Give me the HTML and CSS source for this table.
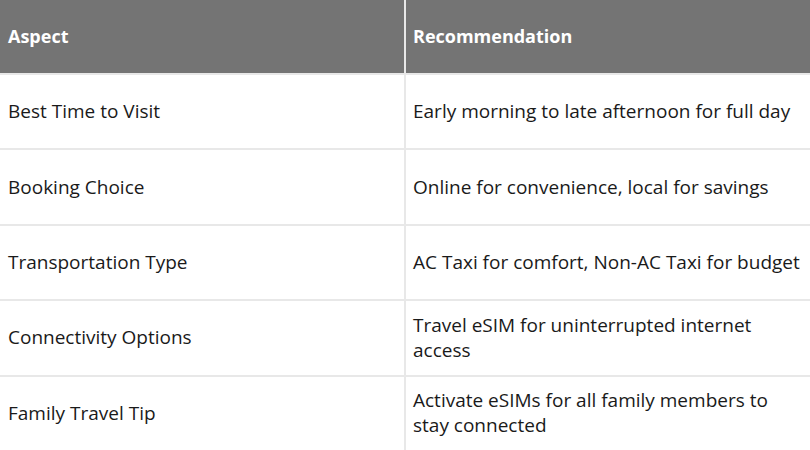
FILE: index.html
```html
<!DOCTYPE html>
<html>
<head>
<meta charset="utf-8">
<link rel="stylesheet" href="styles.css">
</head>
<body>
<table class="tbl">
  <colgroup><col class="c1"><col class="c2"></colgroup>
  <thead>
    <tr><th>Aspect</th><th>Recommendation</th></tr>
  </thead>
  <tbody>
    <tr><td>Best Time to Visit</td><td>Early morning to late afternoon for full day</td></tr>
    <tr><td>Booking Choice</td><td>Online for convenience, local for savings</td></tr>
    <tr><td>Transportation Type</td><td>AC Taxi for comfort, Non-AC Taxi for budget</td></tr>
    <tr><td>Connectivity Options</td><td>Travel eSIM for uninterrupted internet access</td></tr>
    <tr><td>Family Travel Tip</td><td>Activate eSIMs for all family members to stay connected</td></tr>
  </tbody>
</table>
</body>
</html>
```
FILE: styles.css
```css
html, body { margin: 0; padding: 0; background: #fff; }
.tbl {
  width: 810px;
  height: 450px;
  border-collapse: collapse;
  table-layout: fixed;
  font-family: "Open Sans", "Noto Sans", sans-serif;
  font-size: 19px;
  line-height: 25px;
  color: #1a1a1a;
}
.c1 { width: 405px; }
.c2 { width: 405px; }
.tbl th, .tbl td {
  border: 2px solid #e8e8e8;
  padding: 0 8px 0 7px;
  text-align: left;
  vertical-align: middle;
  height: 73px;
}
.tbl tr > :first-child { padding-left: 8px; }
.tbl th {
  background: #747474;
  color: #fff;
  font-weight: 700;
  font-size: 18px;
  border-top: 0;
}
.tbl tr > :first-child { border-left: 0; }
.tbl tr > :last-child { border-right: 0; }
.tbl tbody tr:last-child td { border-bottom: 0; }
```
